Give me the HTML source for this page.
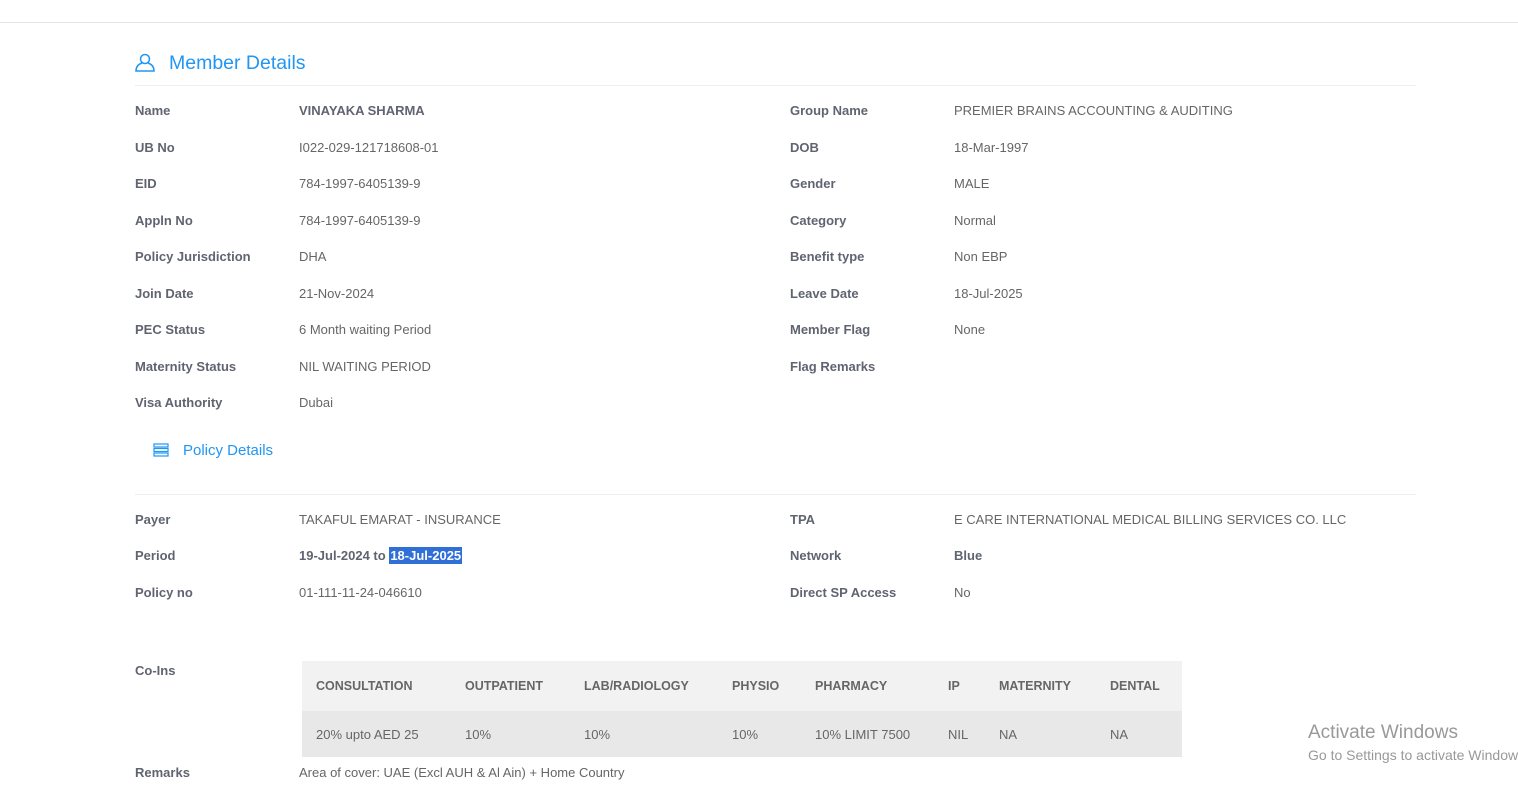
<!DOCTYPE html>
<html><head><style>
body{margin:0;width:1518px;height:793px;background:#fff;font-family:"Liberation Sans",sans-serif;color:#666;position:relative;overflow:hidden}
.t{position:absolute;font-size:13px;line-height:16px;white-space:nowrap;transform:translateY(-7px)}
.l{font-weight:bold;color:#5f6470}
.b{font-weight:bold;color:#5f6470}
.line{position:absolute;height:1px;background:#eee}
.h{position:absolute;color:#2196f3;white-space:nowrap}
.th{position:absolute;font-size:12.5px;font-weight:bold;color:#666;transform:translateY(-7px);line-height:16px}
.td{position:absolute;font-size:13px;color:#666;transform:translateY(-7px);line-height:16px}
</style></head><body>
<div class="line" style="left:0;top:22px;width:1518px;background:#e5e5e5"></div>
<svg style="position:absolute;left:135px;top:53px" width="20" height="19" viewBox="0 0 20 19"><circle cx="10" cy="6" r="4.5" fill="none" stroke="#2196f3" stroke-width="1.5"/><path d="M7 10 Q1 12 1 18 H19 Q19 12 13 10" fill="none" stroke="#2196f3" stroke-width="1.5"/></svg>
<div class="h" style="left:169px;top:52px;font-size:19.5px">Member Details</div>
<div class="line" style="left:135px;top:85px;width:1281px"></div>

<div class="t l" style="left:135px;top:110px">Name</div><div class="t b" style="left:299px;top:110px">VINAYAKA SHARMA</div>
<div class="t l" style="left:135px;top:147px">UB No</div><div class="t" style="left:299px;top:147px">I022-029-121718608-01</div>
<div class="t l" style="left:135px;top:183px">EID</div><div class="t" style="left:299px;top:183px">784-1997-6405139-9</div>
<div class="t l" style="left:135px;top:220px">Appln No</div><div class="t" style="left:299px;top:220px">784-1997-6405139-9</div>
<div class="t l" style="left:135px;top:256px">Policy Jurisdiction</div><div class="t" style="left:299px;top:256px">DHA</div>
<div class="t l" style="left:135px;top:293px">Join Date</div><div class="t" style="left:299px;top:293px">21-Nov-2024</div>
<div class="t l" style="left:135px;top:329px">PEC Status</div><div class="t" style="left:299px;top:329px">6 Month waiting Period</div>
<div class="t l" style="left:135px;top:366px">Maternity Status</div><div class="t" style="left:299px;top:366px">NIL WAITING PERIOD</div>
<div class="t l" style="left:135px;top:402px">Visa Authority</div><div class="t" style="left:299px;top:402px">Dubai</div>

<div class="t l" style="left:790px;top:110px">Group Name</div><div class="t" style="left:954px;top:110px">PREMIER BRAINS ACCOUNTING &amp; AUDITING</div>
<div class="t l" style="left:790px;top:147px">DOB</div><div class="t" style="left:954px;top:147px">18-Mar-1997</div>
<div class="t l" style="left:790px;top:183px">Gender</div><div class="t" style="left:954px;top:183px">MALE</div>
<div class="t l" style="left:790px;top:220px">Category</div><div class="t" style="left:954px;top:220px">Normal</div>
<div class="t l" style="left:790px;top:256px">Benefit type</div><div class="t" style="left:954px;top:256px">Non EBP</div>
<div class="t l" style="left:790px;top:293px">Leave Date</div><div class="t" style="left:954px;top:293px">18-Jul-2025</div>
<div class="t l" style="left:790px;top:329px">Member Flag</div><div class="t" style="left:954px;top:329px">None</div>
<div class="t l" style="left:790px;top:366px">Flag Remarks</div>

<svg style="position:absolute;left:153px;top:443px" width="16" height="14" viewBox="0 0 16 14"><g fill="none" stroke="#2196f3" stroke-width="1.2"><rect x="1" y="1" width="14" height="3"/><rect x="1" y="5.5" width="14" height="3"/><rect x="1" y="10" width="14" height="3"/></g></svg>
<div class="h" style="left:183px;top:442px;font-size:15px">Policy Details</div>
<div class="line" style="left:135px;top:494px;width:1281px"></div>

<div class="t l" style="left:135px;top:519px">Payer</div><div class="t" style="left:299px;top:519px">TAKAFUL EMARAT - INSURANCE</div>
<div class="t l" style="left:135px;top:555px">Period</div><div class="t b" style="left:299px;top:555px">19-Jul-2024 to <span style="background:#2f6fd6;color:#fff;padding:1px 1px">18-Jul-2025</span></div>
<div class="t l" style="left:135px;top:592px">Policy no</div><div class="t" style="left:299px;top:592px">01-111-11-24-046610</div>
<div class="t l" style="left:790px;top:519px">TPA</div><div class="t" style="left:954px;top:519px">E CARE INTERNATIONAL MEDICAL BILLING SERVICES CO. LLC</div>
<div class="t l" style="left:790px;top:555px">Network</div><div class="t b" style="left:954px;top:555px">Blue</div>
<div class="t l" style="left:790px;top:592px">Direct SP Access</div><div class="t" style="left:954px;top:592px">No</div>

<div class="t l" style="left:135px;top:670px">Co-Ins</div>
<div style="position:absolute;left:302px;top:661px;width:880px;height:50px;background:#f2f2f2"></div>
<div style="position:absolute;left:302px;top:711px;width:880px;height:46px;background:#e8e8e8"></div>
<div class="th" style="left:316px;top:685px">CONSULTATION</div><div class="td" style="left:316px;top:734px">20% upto AED 25</div>
<div class="th" style="left:465px;top:685px">OUTPATIENT</div><div class="td" style="left:465px;top:734px">10%</div>
<div class="th" style="left:584px;top:685px">LAB/RADIOLOGY</div><div class="td" style="left:584px;top:734px">10%</div>
<div class="th" style="left:732px;top:685px">PHYSIO</div><div class="td" style="left:732px;top:734px">10%</div>
<div class="th" style="left:815px;top:685px">PHARMACY</div><div class="td" style="left:815px;top:734px">10% LIMIT 7500</div>
<div class="th" style="left:948px;top:685px">IP</div><div class="td" style="left:948px;top:734px">NIL</div>
<div class="th" style="left:999px;top:685px">MATERNITY</div><div class="td" style="left:999px;top:734px">NA</div>
<div class="th" style="left:1110px;top:685px">DENTAL</div><div class="td" style="left:1110px;top:734px">NA</div>

<div class="t l" style="left:135px;top:772px">Remarks</div><div class="t" style="left:299px;top:772px">Area of cover: UAE (Excl AUH &amp; Al Ain) + Home Country</div>

<div style="position:absolute;left:1308px;top:722px;font-size:19px;color:#999;white-space:nowrap">Activate Windows</div>
<div style="position:absolute;left:1308px;top:747px;font-size:14px;color:#999;white-space:nowrap">Go to Settings to activate Windows.</div>
</body></html>
